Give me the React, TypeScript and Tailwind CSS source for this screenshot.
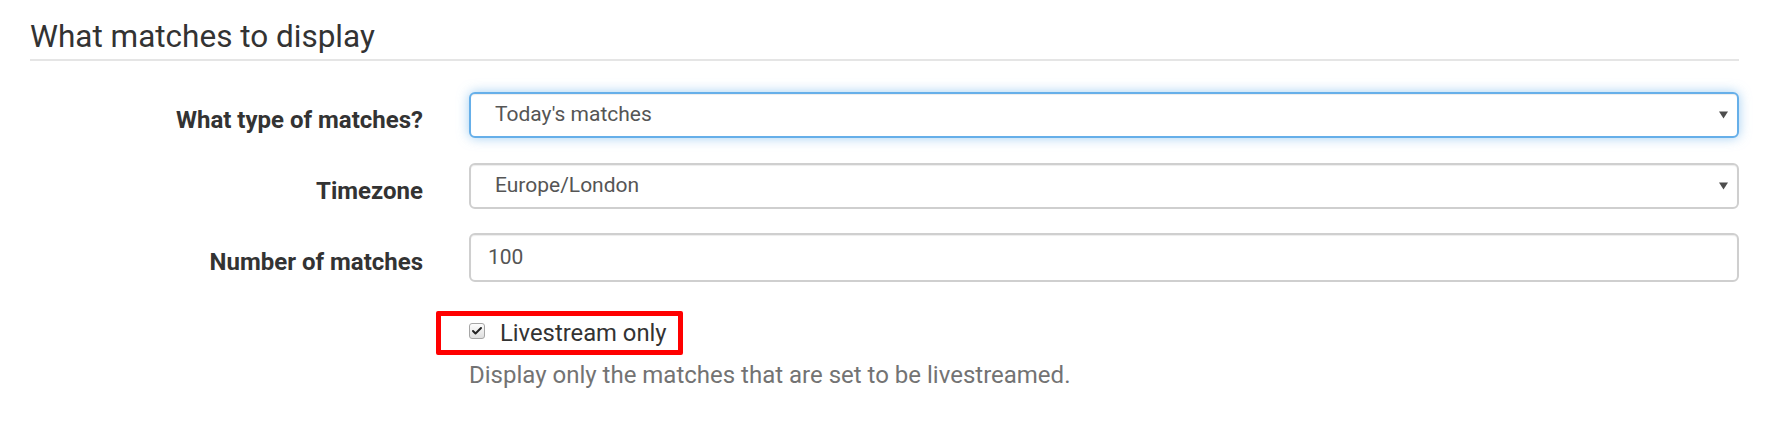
import { Check } from "lucide-react";

const font = { fontFamily: "Roboto, 'Noto Sans', Arial, sans-serif" };

const Arrow = () => (
  <svg width="9" height="8" viewBox="0 0 9 8" className="shrink-0">
    <path d="M0 0.5 H9 L4.5 7.5 Z" fill="#4d4d4d" />
  </svg>
);

const FakeSelect = ({ value, focused }: { value: string; focused?: boolean }) => (
  <div
    className={
      focused
        ? "h-[46px] flex items-center justify-between pl-[24px] pr-[9px] bg-white rounded-[6px] border-2 border-[#66afe9] shadow-[inset_0_1px_1px_rgba(0,0,0,0.075),0_0_12px_rgba(102,175,233,0.6)]"
        : "h-[46px] flex items-center justify-between pl-[24px] pr-[9px] bg-white rounded-[6px] border-2 border-[#cfcfcf] shadow-[inset_0_1px_1px_rgba(0,0,0,0.075)]"
    }
  >
    <span className="text-[21px] text-[#555]">{value}</span>
    <Arrow />
  </div>
);

const Row = ({ label, children, className }: { label: string; children: React.ReactNode; className: string }) => (
  <div className={`flex items-center gap-[46px] ${className}`}>
    <label className="w-[393px] shrink-0 text-right pt-[9px] text-[24px] font-bold text-[#333]">{label}</label>
    <div className="flex-1">{children}</div>
  </div>
);

export default function App() {
  return (
    <div className="w-[1783px] h-[425px] bg-white overflow-hidden" style={font}>
      <div className="ml-[30px] w-[1709px]">
        <h2 className="pt-[15px] leading-[44px] text-[31.5px] font-normal text-[#333] border-b-2 border-[#e5e5e5]">
          What matches to display
        </h2>

        <Row label="What type of matches?" className="mt-[31px]">
          <FakeSelect value="Today's matches" focused />
        </Row>

        <Row label="Timezone" className="mt-[25px]">
          <FakeSelect value="Europe/London" />
        </Row>

        <Row label="Number of matches" className="mt-[24px]">
          <div className="h-[49px] flex items-center pl-[17px] bg-white rounded-[6px] border-2 border-[#cfcfcf] shadow-[inset_0_1px_1px_rgba(0,0,0,0.075)]">
            <span className="text-[21px] text-[#555]">100</span>
          </div>
        </Row>

        <div className="ml-[439px] mt-[29px]">
          <div className="relative h-[44px] flex items-center gap-[15px]">
            <div className="absolute left-[-33px] top-0 w-[247px] h-[44px] border-[5px] border-[#ff0000] rounded-[2px]" />
            <div className="w-[16px] h-[16px] -mt-[4px] rounded-[3px] border border-[#a6a6a6] bg-gradient-to-b from-[#fdfdfd] to-[#dedede] flex items-center justify-center">
              <Check className="w-[12px] h-[12px] text-[#222]" strokeWidth={4} />
            </div>
            <span className="text-[23.8px] text-[#333] leading-[30px]">Livestream only</span>
          </div>
          <p className="mt-[5px] text-[24px] leading-[31px] text-[#737373]">
            Display only the matches that are set to be livestreamed.
          </p>
        </div>
      </div>
    </div>
  );
}
